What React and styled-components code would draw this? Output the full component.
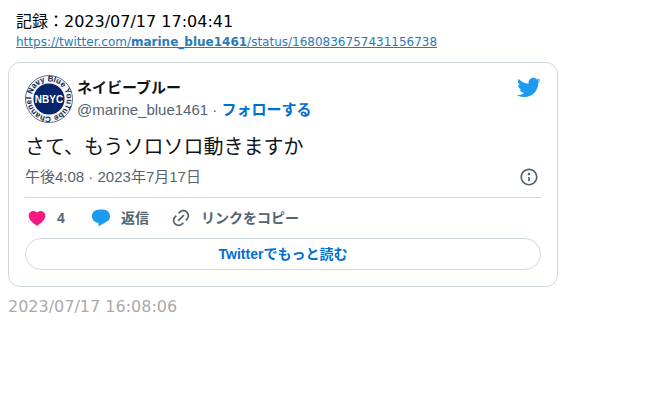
import React from "react";
import styled, { createGlobalStyle } from "styled-components";

const GlobalStyle = createGlobalStyle`
  *, *::before, *::after { box-sizing: border-box; }
  body {
    margin: 0;
    background: #fff;
    color: #000;
    font-family: "DejaVu Sans", "Noto Sans CJK JP", sans-serif;
    font-size: 16px;
    line-height: 20px;
  }
`;

const Page = styled.main`
  padding: 12px 8px;
`;

const Record = styled.header`
  padding: 0 8px;
  margin-bottom: 10px;
`;

const RecordTime = styled.div`
  line-height: 20px;
`;

const StatusLink = styled.a`
  display: block;
  width: fit-content;
  font-size: 12px;
  line-height: 20px;
  color: #2a7ab9;
`;

const Card = styled.article`
  max-width: 550px;
  padding: 12px 16px 16px;
  border: 1px solid #cfd9de;
  border-radius: 12px;
  color: #0f1419;
  font-family: "Liberation Sans", "Noto Sans CJK JP", sans-serif;
`;

const Author = styled.header`
  display: flex;
  align-items: flex-start;
`;

const Avatar = styled.svg`
  flex: none;
  width: 48px;
  height: 48px;
  margin-right: 4px;
`;

const Names = styled.div`
  flex: 1;
  min-width: 0;
  font-size: 15px;
  line-height: 22px;
  padding-top: 2px;
`;

const DisplayName = styled.div`
  font-weight: 700;
`;

const Handle = styled.div`
  color: #536471;
`;

const FollowLink = styled.a`
  color: #006fd6;
  font-weight: 700;
  text-decoration: none;
`;

const Icon = styled.svg`
  display: block;
  flex: none;
  width: ${(p) => p.$size}px;
  height: ${(p) => p.$size}px;
  fill: ${(p) => p.$color};
`;

const TweetText = styled.p`
  margin: 8px 0 0;
  font-size: 20px;
  line-height: 32px;
`;

const Meta = styled.div`
  display: flex;
  align-items: center;
  justify-content: space-between;
  height: 28px;
  padding-right: 2px;
  font-size: 15px;
  color: #536471;
`;

const InfoButton = styled.button`
  padding: 0;
  border: 0;
  background: none;
`;

const Actions = styled.div`
  display: flex;
  align-items: center;
  gap: 22px;
  height: 41px;
  margin-top: 6px;
  padding-left: 2px;
  border-top: 1px solid #cfd9de;
`;

const Action = styled.button`
  display: flex;
  align-items: center;
  gap: 10px;
  padding: 0;
  border: 0;
  background: none;
  color: #536471;
  font: inherit;
  font-size: 14px;
  font-weight: 700;
  line-height: 20px;
  text-align: left;
`;

const ActionLabel = styled.span`
  min-width: 12px;
`;

const ReadMore = styled.button`
  display: block;
  width: 100%;
  height: 32px;
  padding: 0 16px;
  border: 1px solid #cfd9de;
  border-radius: 16px;
  background: none;
  color: #006fd6;
  font: inherit;
  font-size: 14px;
  font-weight: 700;
`;

const PostedTime = styled.div`
  margin-top: 10px;
  color: #aaa;
`;

const paths = {
  bird: "M23.643 4.937c-.835.37-1.732.62-2.675.733.962-.576 1.7-1.49 2.048-2.578-.9.534-1.897.922-2.958 1.13-.85-.904-2.06-1.47-3.4-1.47-2.572 0-4.658 2.086-4.658 4.66 0 .364.042.718.12 1.06-3.873-.195-7.304-2.05-9.602-4.868-.4.69-.63 1.49-.63 2.342 0 1.616.823 3.043 2.072 3.878-.764-.025-1.482-.234-2.11-.583v.06c0 2.257 1.605 4.14 3.737 4.568-.392.106-.803.162-1.227.162-.3 0-.593-.028-.877-.082.593 1.85 2.313 3.198 4.352 3.234-1.595 1.25-3.604 1.995-5.786 1.995-.376 0-.747-.022-1.112-.065 2.062 1.323 4.51 2.093 7.14 2.093 8.57 0 13.255-7.098 13.255-13.254 0-.2-.005-.402-.014-.602.91-.658 1.7-1.477 2.323-2.41z",
  info: "M13.5 8.5c0 .83-.67 1.5-1.5 1.5s-1.5-.67-1.5-1.5S11.17 7 12 7s1.5.67 1.5 1.5zM13 17v-5h-2v5h2zm-1 5.25c5.66 0 10.25-4.59 10.25-10.25S17.66 1.75 12 1.75 1.75 6.34 1.75 12 6.34 22.25 12 22.25zM20.25 12c0 4.56-3.69 8.25-8.25 8.25S3.75 16.56 3.75 12 7.44 3.75 12 3.75s8.25 3.69 8.25 8.25z",
  heart: "M20.884 13.19c-1.351 2.48-4.001 5.12-8.379 7.67l-.503.3-.504-.3c-4.379-2.55-7.029-5.19-8.382-7.67-1.36-2.5-1.41-4.86-.514-6.67.887-1.79 2.647-2.91 4.601-3.01 1.651-.09 3.368.56 4.798 2.01 1.429-1.45 3.146-2.1 4.796-2.01 1.954.1 3.714 1.22 4.601 3.01.896 1.81.846 4.17-.514 6.67z",
  reply: "M9.8 1.9h4.2c5 0 8.9 3.4 8.9 7.9 0 3.1-1.8 5.6-4.7 7.1L9 21.8v-4.1C4.500 17.500 1.100 14.100 1.100 9.800c0-4.500 3.700-7.900 8.700-7.900z",
  link: "M18.36 5.64c-1.95-1.96-5.11-1.96-7.07 0L9.88 7.05 8.46 5.64l1.42-1.42c2.73-2.73 7.16-2.73 9.9 0 2.73 2.74 2.73 7.17 0 9.9l-1.42 1.42-1.41-1.42 1.41-1.41c1.96-1.96 1.96-5.12 0-7.07zm-2.12 3.53l-7.07 7.07-1.41-1.41 7.07-7.07 1.41 1.41zm-12.02.71l1.42-1.42 1.41 1.42-1.41 1.41c-1.96 1.96-1.96 5.12 0 7.07 1.95 1.96 5.11 1.96 7.07 0l1.41-1.41 1.42 1.41-1.42 1.42c-2.73 2.73-7.16 2.73-9.9 0-2.73-2.74-2.73-7.17 0-9.9z",
};

function Glyph({ name, size = 20, color = "#536471" }) {
  return (
    <Icon viewBox="0 0 24 24" $size={size} $color={color} aria-hidden="true">
      <path d={paths[name]} />
    </Icon>
  );
}

function ChannelBadge() {
  return (
    <Avatar viewBox="0 0 48 48" role="img" aria-label="Navy Blue YouTube Channel">
      <defs>
        <path id="ring" d="M6.900 19.400A17.700 17.700 0 0 1 41.100 28.600A17.700 17.700 0 0 1 6.900 19.400" />
      </defs>
      <circle cx="24" cy="24" r="23.5" fill="#f4f8fc" stroke="#63718f" />
      <circle cx="24" cy="24" r="15.5" fill="#06236b" />
      <g fontFamily="Liberation Sans, sans-serif" fontWeight="700">
        <text fill="#14264f" fontSize="8">
          <textPath href="#ring">Navy Blue YouTube Channel</textPath>
        </text>
        <text x="24" y="28" fill="#fff" fontSize="10" textAnchor="middle">NBYC</text>
      </g>
    </Avatar>
  );
}

export default function App() {
  return (
    <>
      <GlobalStyle />
      <Page>
        <Record>
          <RecordTime>記録：2023/07/17 17:04:41</RecordTime>
          <StatusLink href="https://twitter.com/marine_blue1461/status/1680836757431156738">
            https://twitter.com/<b>marine_blue1461</b>/status/1680836757431156738
          </StatusLink>
        </Record>
        <Card>
          <Author>
            <ChannelBadge />
            <Names>
              <DisplayName>ネイビーブルー</DisplayName>
              <Handle>
                @marine_blue1461 · <FollowLink href="#follow">フォローする</FollowLink>
              </Handle>
            </Names>
            <Glyph name="bird" size={25} color="#1d9bf0" />
          </Author>
          <TweetText>さて、もうソロソロ動きますか</TweetText>
          <Meta>
            <time dateTime="2023-07-17T16:08">午後4:08 · 2023年7月17日</time>
            <InfoButton aria-label="情報">
              <Glyph name="info" />
            </InfoButton>
          </Meta>
          <Actions>
            <Action>
              <Glyph name="heart" color="#f91880" />
              <ActionLabel>4</ActionLabel>
            </Action>
            <Action>
              <Glyph name="reply" color="#1d9bf0" />
              <ActionLabel>返信</ActionLabel>
            </Action>
            <Action>
              <Glyph name="link" />
              <ActionLabel>リンクをコピー</ActionLabel>
            </Action>
          </Actions>
          <ReadMore>Twitterでもっと読む</ReadMore>
        </Card>
        <PostedTime>2023/07/17 16:08:06</PostedTime>
      </Page>
    </>
  );
}
